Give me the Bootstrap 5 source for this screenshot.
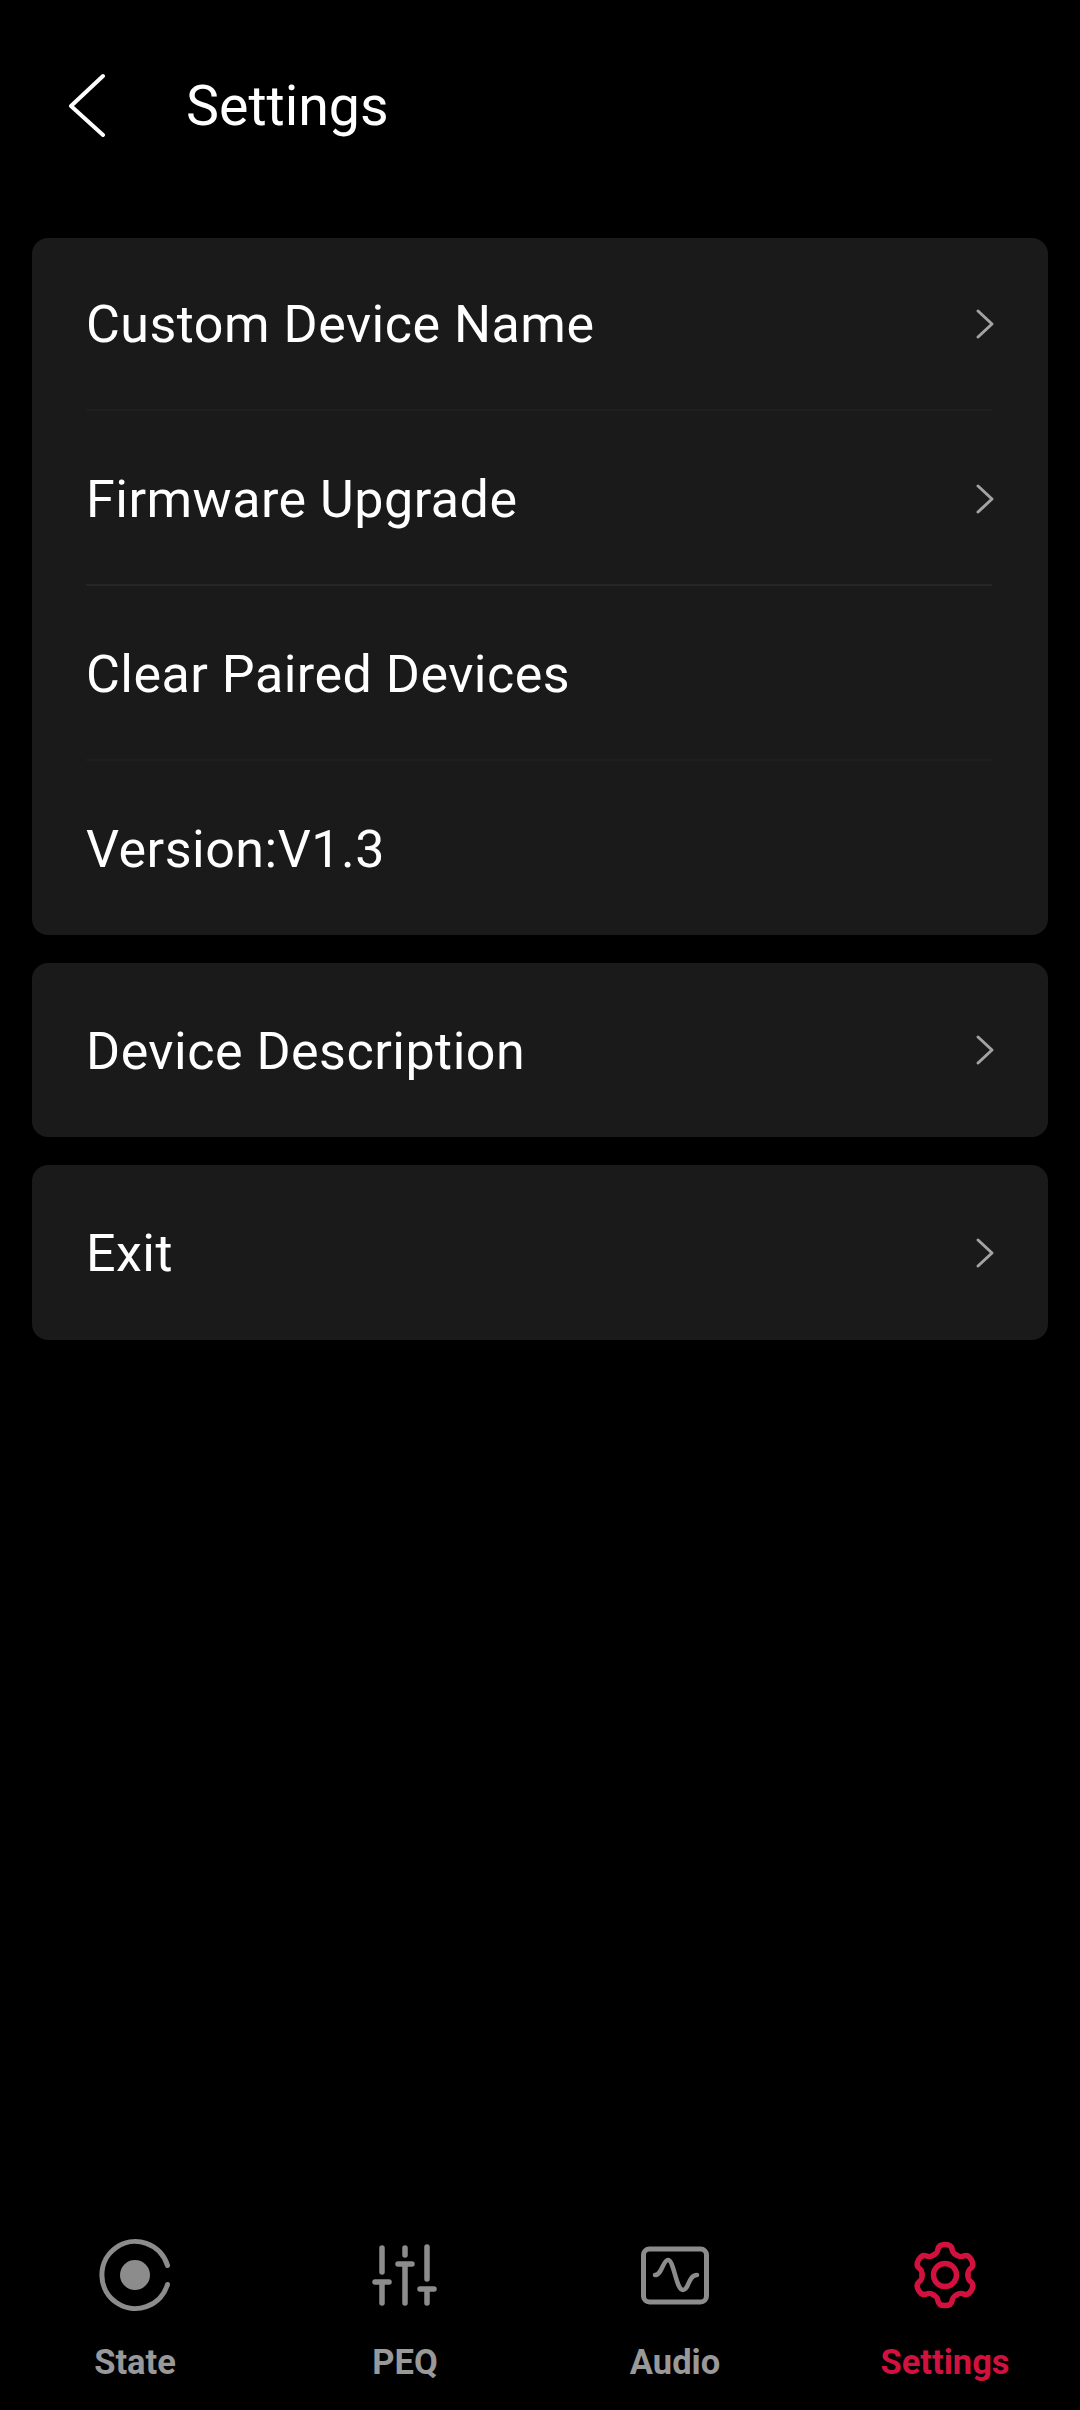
<!DOCTYPE html>
<html lang="en">
<head>
<meta charset="utf-8">
<title>Settings</title>
<link href="https://cdn.jsdelivr.net/npm/bootstrap@5.3.0/dist/css/bootstrap.min.css" rel="stylesheet">
<style>
html,body{background:#000;margin:0}
body{font-family:Roboto,"Liberation Sans",sans-serif;color:#fff}
.app-shell{height:2410px}
.top-head{height:210px;padding-left:68px}
.back-ico{width:38px;height:64px;margin-right:80px}
.head-title{font-size:55.5px;font-weight:400;line-height:1;margin:0;color:#fff;padding-top:3px}
.stack{margin:28px 32px 0;gap:28px}
.panel{background:#1a1a1a;border-radius:16px;padding:0 56px 0 54px;overflow:hidden}
.panel .list-group-item{background:transparent;color:#fff;padding:0;height:173px;font-size:52px;letter-spacing:.5px;line-height:1;border:0}
.panel .list-group-item>span{padding-top:3px}
.panel .list-group-item.row-mid{height:175px}
.panel .list-group-item.row-mid>span{padding-top:5px}
.panel .list-group-item.row-mid>.go-ico{margin-top:2px}
.panel .list-group-item.row-solo{height:174px}
.panel .list-group-item.row-wide{height:175px}
.panel .list-group-item.row-end{height:174px}
.panel .list-group-item.rule-a{border-bottom:2px solid #1f1f1f}
.panel .list-group-item.rule-b{border-bottom:2px solid #262626}
.go-ico{width:22px;height:34px;margin-right:-3px}
.tabbar{padding-bottom:31px}
.tab-cell{color:#999;font-size:34.5px;font-weight:700;line-height:1;gap:30px}
.tab-cell.is-on{color:#d3113f}
.tab-ico{width:80px;height:80px;display:block}
</style>
</head>
<body>
<div class="app-shell d-flex flex-column">
  <header class="top-head d-flex align-items-center">
    <svg class="back-ico" viewBox="0 0 38 64" fill="none" stroke="#fff" stroke-width="4" stroke-linecap="round" stroke-linejoin="round"><path d="M35 3 3 33 35 62"/></svg>
    <h1 class="head-title">Settings</h1>
  </header>

  <main class="stack d-flex flex-column">
    <div class="panel list-group list-group-flush">
      <div class="list-group-item rule-a d-flex justify-content-between align-items-center"><span>Custom Device Name</span>
        <svg class="go-ico" viewBox="0 0 22 34" fill="none" stroke="#a3a3a3" stroke-width="3" stroke-linecap="round" stroke-linejoin="round"><path d="M5 4 19 17 5 30"/></svg></div>
      <div class="list-group-item row-mid rule-b d-flex justify-content-between align-items-center"><span>Firmware Upgrade</span>
        <svg class="go-ico" viewBox="0 0 22 34" fill="none" stroke="#a3a3a3" stroke-width="3" stroke-linecap="round" stroke-linejoin="round"><path d="M5 4 19 17 5 30"/></svg></div>
      <div class="list-group-item row-mid rule-a d-flex justify-content-between align-items-center"><span>Clear Paired Devices</span></div>
      <div class="list-group-item row-end d-flex justify-content-between align-items-center"><span>Version:V1.3</span></div>
    </div>
    <div class="panel list-group list-group-flush">
      <div class="list-group-item row-solo d-flex justify-content-between align-items-center"><span>Device Description</span>
        <svg class="go-ico" viewBox="0 0 22 34" fill="none" stroke="#a3a3a3" stroke-width="3" stroke-linecap="round" stroke-linejoin="round"><path d="M5 4 19 17 5 30"/></svg></div>
    </div>
    <div class="panel list-group list-group-flush">
      <div class="list-group-item row-wide d-flex justify-content-between align-items-center"><span>Exit</span>
        <svg class="go-ico" viewBox="0 0 22 34" fill="none" stroke="#a3a3a3" stroke-width="3" stroke-linecap="round" stroke-linejoin="round"><path d="M5 4 19 17 5 30"/></svg></div>
    </div>
  </main>

  <nav class="tabbar row g-0 mt-auto">
    <div class="col-3 tab-cell d-flex flex-column align-items-center">
      <svg class="tab-ico" viewBox="-40 -40 80 80" fill="none" stroke="#8c8c8c" stroke-width="5" stroke-linecap="round"><path d="M32.5 -9.5A33.5 33.5 0 1 0 32.5 9.5"/><circle r="15" fill="#8c8c8c" stroke="none"/></svg>
      <span>State</span>
    </div>
    <div class="col-3 tab-cell d-flex flex-column align-items-center">
      <svg class="tab-ico" viewBox="-40 -40 80 80" fill="none" stroke="#8c8c8c" stroke-width="5.5" stroke-linecap="round"><path d="M-23 -27V-3M-23 7V28M-30 7H-16M0 -27V-20M0 -11V28M-7 -11H7M22 -28V4M22 14V28M15 14H29"/></svg>
      <span>PEQ</span>
    </div>
    <div class="col-3 tab-cell d-flex flex-column align-items-center">
      <svg class="tab-ico" viewBox="-40 -40 80 80" fill="none" stroke="#8c8c8c" stroke-width="5" stroke-linecap="round"><rect x="-31.5" y="-26" width="63" height="53" rx="6"/><path stroke-width="4.5" d="M-20 0C-13 0-12 -15-7 -15C-1 -15 1 15 8 15C14 15 13 0 22 0"/></svg>
      <span>Audio</span>
    </div>
    <div class="col-3 tab-cell is-on d-flex flex-column align-items-center">
      <svg class="tab-ico" viewBox="-40 -40 80 80" fill="none" stroke="#d3113f" stroke-width="5.5" stroke-linecap="round" stroke-linejoin="round">
        <g id="gear-tooth"><path d="M-11.5 -19.9C-8 -21.5-7.5 -23-7 -26C-6.5 -29-4 -30.5 0 -30.5C4 -30.5 6.5 -29 7 -26C7.5 -23 8 -21.5 11.5 -19.9"/></g>
        <use href="#gear-tooth" transform="rotate(60)"/><use href="#gear-tooth" transform="rotate(120)"/><use href="#gear-tooth" transform="rotate(180)"/><use href="#gear-tooth" transform="rotate(240)"/><use href="#gear-tooth" transform="rotate(300)"/>
        <circle r="11.5"/>
      </svg>
      <span>Settings</span>
    </div>
  </nav>
</div>
<script src="https://cdn.jsdelivr.net/npm/bootstrap@5.3.0/dist/js/bootstrap.bundle.min.js"></script>
</body>
</html>
